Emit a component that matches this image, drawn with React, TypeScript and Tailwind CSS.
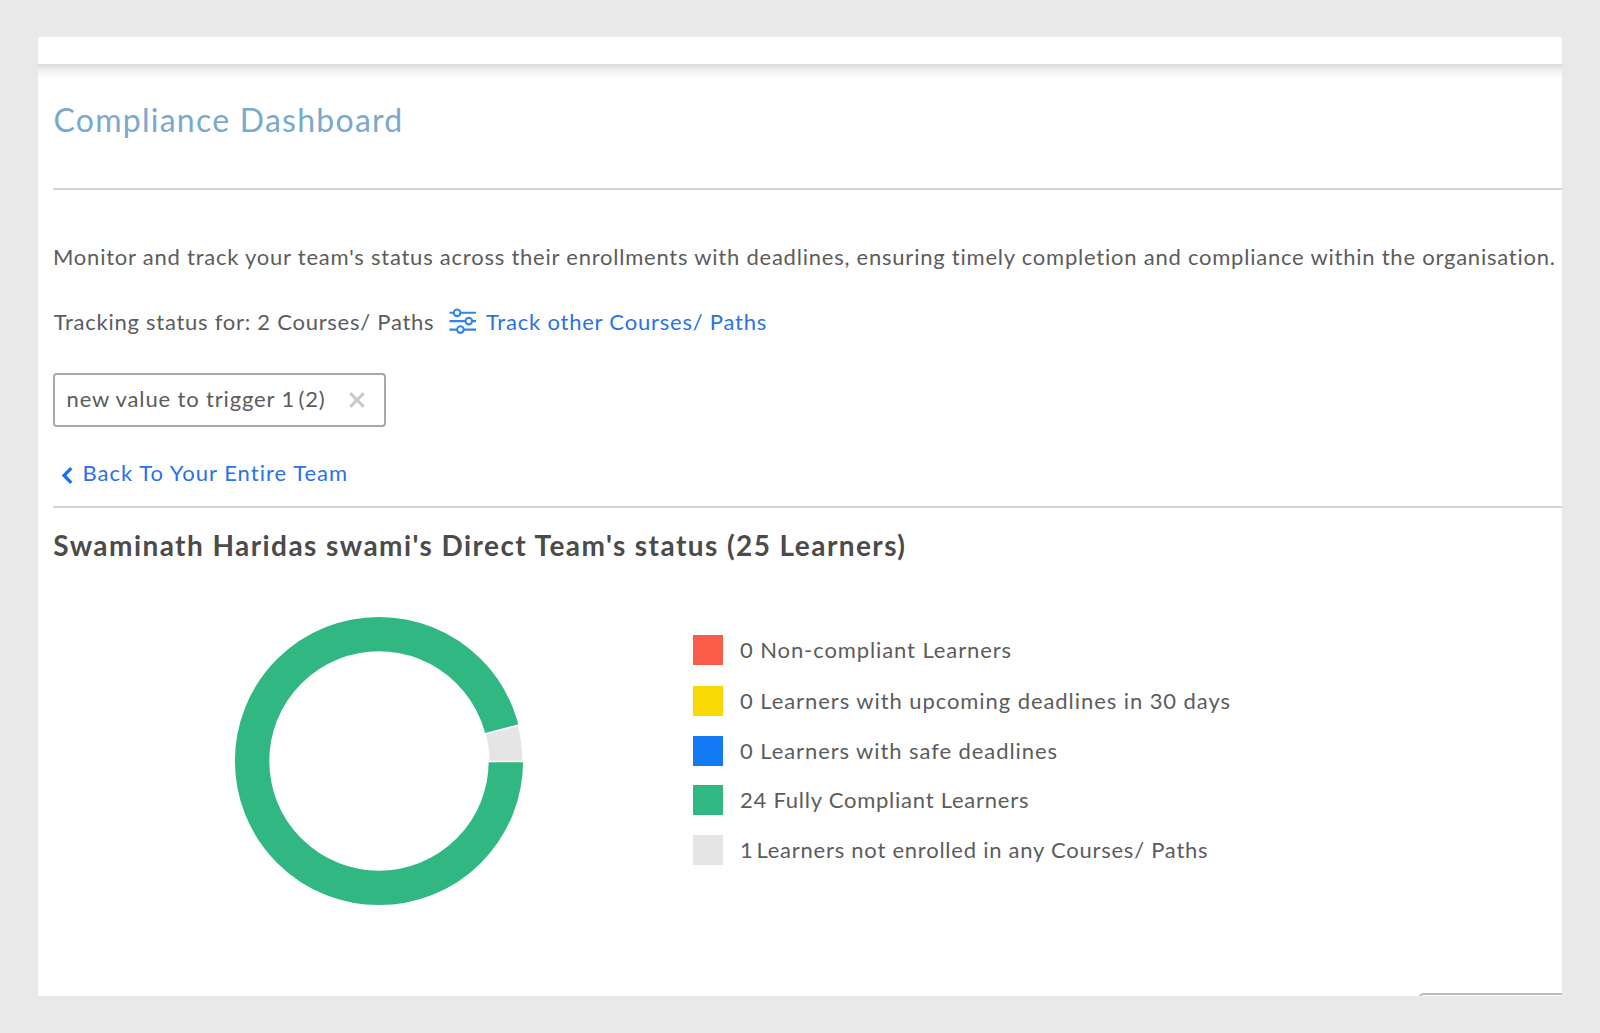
const legend = [
  { count: "0", label: "Non-compliant Learners", swatch: "bg-[#f95d47]", text: "tracking-[0.9px]", gap: "mr-0", row: "h-[51px]" },
  { count: "0", label: "Learners with upcoming deadlines in 30 days", swatch: "bg-[#f8d904]", text: "tracking-[0.93px]", gap: "mr-0", row: "h-[51px]" },
  { count: "0", label: "Learners with safe deadlines", swatch: "bg-[#147af3]", text: "tracking-[0.92px]", gap: "mr-0", row: "h-[49px]" },
  { count: "24", label: "Fully Compliant Learners", swatch: "bg-[#30b782]", text: "tracking-[0.76px]", gap: "mr-0", row: "h-[50.5px]" },
  { count: "1", label: "Learners not enrolled in any Courses/ Paths", swatch: "bg-[#e5e5e5]", text: "tracking-[0.76px]", gap: "mr-[-3.5px]", row: "h-[49.5px]" },
];

function SlidersIcon() {
  return (
    <svg className="mt-[-2px] h-[26px] w-[28px] shrink-0" viewBox="0 0 28 26" fill="none" stroke="#3184e8" strokeWidth="2.1">
      <path d="M.5 4.8h4M11.8 4.8h15.2M.5 13.1h15.6M23.4 13.1h3.6M.5 21.6h7.2M15 21.6h12" />
      <circle cx="8.1" cy="4.8" r="3.3" />
      <circle cx="19.8" cy="13.1" r="3.3" />
      <circle cx="11.4" cy="21.6" r="3.3" />
    </svg>
  );
}

function Donut() {
  return (
    <svg className="size-[290px] shrink-0" viewBox="-145 -145 290 290">
      <circle r="126.9" fill="none" stroke="#30b782" strokeWidth="34.4" />
      <path d="M144.1 0.5A144.1 144.1 0 0 0 139.57 -35.84L106.25 -27.28A109.7 109.7 0 0 1 109.7 0.5Z" fill="#e5e5e5" stroke="#fff" strokeWidth="1.6" />
    </svg>
  );
}

export default function App() {
  return (
    <div className="h-[1033px] w-[1600px] overflow-hidden bg-[#e9e9e9] pt-[37px] pl-[38px] font-['Lato',sans-serif] text-[22px] leading-[28px] whitespace-nowrap text-[#5c5c5c]">
      <main className="flex h-[958.5px] w-[1524px] flex-col overflow-hidden bg-white">
        <div className="h-[26.5px] shrink-0 bg-white" />
        <div className="h-[16.5px] shrink-0 bg-linear-to-b from-[#dadada] via-[#f3f3f3] via-45% to-white" />

        <div className="flex grow flex-col pl-[15px]">
          <h1 className="mt-[20px] ml-[0.5px] text-[32px] leading-[40px] tracking-[1.25px] text-[#7ba9cd]">Compliance Dashboard</h1>
          <div className="mt-[48px] h-[2px] shrink-0 bg-[#d3d5d4]" />

          <p className="mt-[53px] tracking-[0.77px]">
            Monitor and track your team's status across their enrollments with deadlines, ensuring timely completion and compliance within the organisation.
          </p>

          <div className="mt-[37px] flex items-center">
            <span className="w-[396px] pl-[0.7px] tracking-[0.74px]">Tracking status for: 2 Courses/ Paths</span>
            <a className="flex items-center gap-[9px] text-[#2a72e5]">
              <SlidersIcon />
              <span className="tracking-[0.79px]">Track other Courses/ Paths</span>
            </a>
          </div>

          <div className="mt-[37px] flex h-[54px] w-[333px] shrink-0 items-center justify-between rounded-[4px] border-2 border-[#a9a9a9] pr-[19.5px] pb-[2px] pl-[11.5px]">
            <span className="tracking-[0.85px]">
              new value to trigger 1<span className="ml-[-3px]"> (2)</span>
            </span>
            <svg className="mt-[1px] size-[16px]" viewBox="0 0 16 16" fill="none" stroke="#c9c9c9" strokeWidth="3">
              <path d="M1.3 1.3l13.4 13.4M14.7 1.3L1.3 14.7" />
            </svg>
          </div>

          <a className="mt-[32px] flex items-center pl-[8px] text-[#2a72e5]">
            <svg className="mt-[4px] h-[17px] w-[12px]" viewBox="0 0 12 17" fill="none" stroke="#1675ec" strokeWidth="3.3">
              <path d="M10.3 1.2L3 8.5l7.3 7.3" />
            </svg>
            <span className="ml-[9.5px] tracking-[1.02px]">Back To Your Entire Team</span>
          </a>
          <div className="mt-[19px] h-[2px] shrink-0 bg-[#d3d5d4]" />

          <h2 className="mt-[19px] ml-[0.3px] text-[28px] leading-[36px] font-bold tracking-[1.43px] text-[#4b4b4b]">
            Swaminath Haridas swami's Direct Team's status (25 Learners)
          </h2>

          <div className="mt-[52.5px] flex pl-[180.7px]">
            <Donut />
            <ul className="mt-[8.5px] ml-[169.3px] flex flex-col">
              {legend.map((item) => (
                <li key={item.label} className={`flex items-center ${item.row}`}>
                  <span className={`h-[30px] w-[30px] ${item.swatch}`} />
                  <span className={`ml-[17px] ${item.text}`}>
                    <span className={item.gap}>{item.count}</span> {item.label}
                  </span>
                </li>
              ))}
            </ul>
          </div>

          <div className="mt-auto h-[2.5px] w-[144px] shrink-0 self-end overflow-hidden">
            <div className="h-[40px] w-[160px] rounded-[6px] border-2 border-[#b9b9b9]" />
          </div>
        </div>
      </main>
    </div>
  );
}
